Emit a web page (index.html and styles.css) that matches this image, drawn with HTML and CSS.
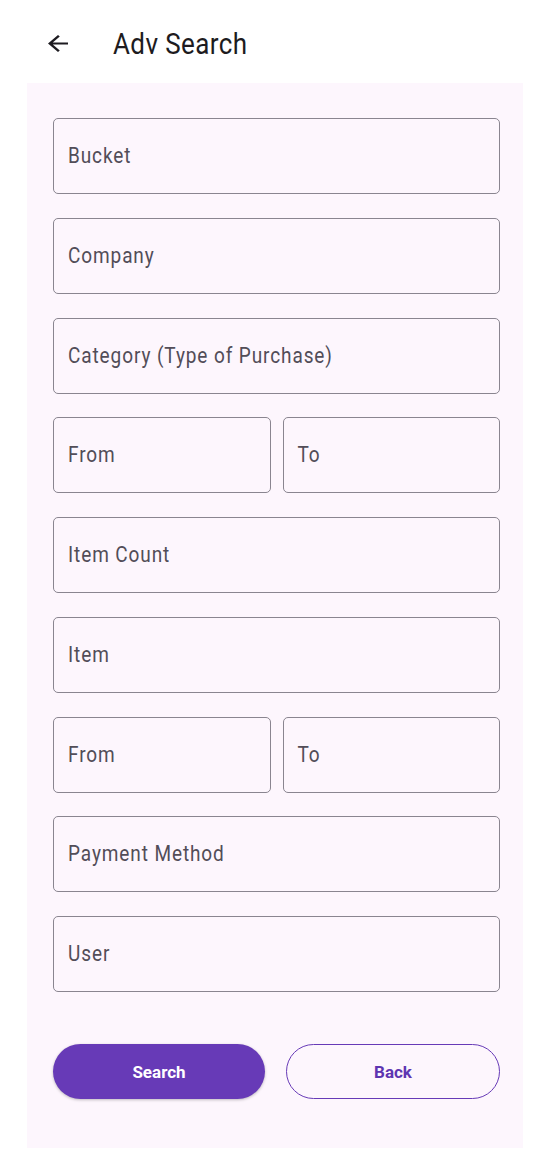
FILE: index.html
```html
<!DOCTYPE html>
<html>
<head>
<meta charset="utf-8">
<link rel="stylesheet" href="styles.css">
</head>
<body>
<header class="appbar">
  <svg class="back-icon" viewBox="4 4 16 16" preserveAspectRatio="none"><path d="M20 11H7.83l5.59-5.59L12 4l-8 8 8 8 1.41-1.41L7.83 13H20v-2z" fill="#1d1b20"/></svg>
  <h1 class="title">Adv Search</h1>
</header>
<main class="card">
  <div class="fields">
    <div class="field"><span class="label">Bucket</span></div>
    <div class="field"><span class="label">Company</span></div>
    <div class="field"><span class="label">Category (Type of Purchase)</span></div>
    <div class="row">
      <div class="field"><span class="label">From</span></div>
      <div class="field"><span class="label">To</span></div>
    </div>
    <div class="field"><span class="label">Item Count</span></div>
    <div class="field"><span class="label">Item</span></div>
    <div class="row">
      <div class="field"><span class="label">From</span></div>
      <div class="field"><span class="label">To</span></div>
    </div>
    <div class="field"><span class="label">Payment Method</span></div>
    <div class="field"><span class="label">User</span></div>
  </div>
  <div class="actions">
    <button class="btn btn-filled">Search</button>
    <button class="btn btn-outline">Back</button>
  </div>
</main>
</body>
</html>
```
FILE: styles.css
```css
* { box-sizing: border-box; }
html, body { margin: 0; padding: 0; background: #ffffff; }
body { font-family: Roboto, "Noto Sans", sans-serif; width: 550px; height: 1170px; overflow: hidden; }

.appbar {
  height: 83px;
  display: flex;
  align-items: center;
  padding-left: 48px;
  padding-top: 4px;
}
.back-icon { width: 20px; height: 17px; }
.title {
  margin: 0 0 0 45px;
  font-size: 26px;
  font-weight: 400;
  color: #1d1b20;
  letter-spacing: 0.4px;
  transform: scaleY(1.1);
}

.card {
  margin: 0 27px;
  width: 496px;
  height: 1065px;
  background: #fdf6fd;
  padding: 35px 23px 0 26px;
}

.fields {
  display: flex;
  flex-direction: column;
  gap: 23.75px;
}
.row {
  display: flex;
  gap: 12px;
}
.row .field { flex: 1; }
.field {
  height: 76px;
  border: 1.5px solid #8a8590;
  border-radius: 5px;
  display: flex;
  align-items: center;
  padding-left: 14px;
  padding-bottom: 1px;
}
.label {
  font-size: 19px;
  color: #524d58;
  letter-spacing: 0.9px;
  transform: scaleY(1.12);
}

.actions {
  display: flex;
  gap: 21px;
  margin-top: 52px;
}
.btn {
  flex: 1;
  height: 55px;
  border-radius: 28px;
  font-family: Roboto, "Noto Sans", sans-serif;
  font-size: 17px;
  font-weight: 700;
}
.btn-filled {
  background: #673ab7;
  color: #ffffff;
  border: none;
  box-shadow: 0 1px 3px rgba(0,0,0,0.25);
}
.btn-outline {
  background: transparent;
  color: #5e35b1;
  border: 1.5px solid #673ab7;
}
```
